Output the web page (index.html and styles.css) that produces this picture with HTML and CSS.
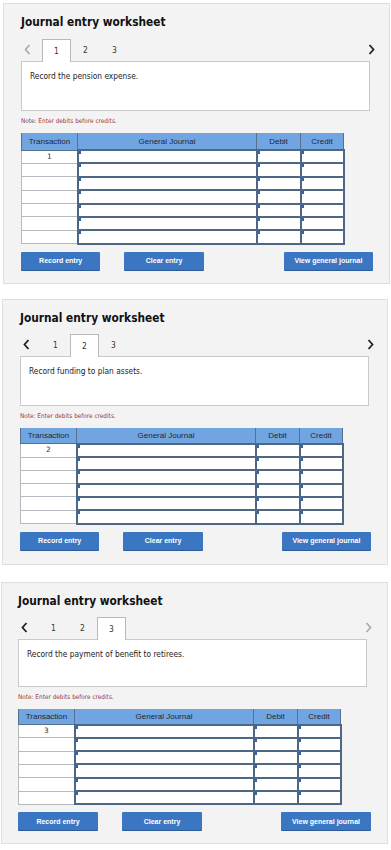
FILE: index.html
```html
<!DOCTYPE html>
<html>
<head>
<meta charset="utf-8">
<link rel="stylesheet" href="styles.css">
</head>
<body>

<section class="ws ws-1">
  <h2 class="ws-title">Journal entry worksheet</h2>
  <div class="tabs">
    <span class="arrow arrow-off"><svg width="7" height="11" viewBox="0 0 7 11"><path d="M5.5 1 L1.5 5.5 L5.5 10" fill="none" stroke="currentColor" stroke-width="1.6"/></svg></span>
    <span class="tab tab-on">1</span>
    <span class="tab">2</span>
    <span class="tab">3</span>
    <span class="arrow arrow-next"><svg width="7" height="11" viewBox="0 0 7 11"><path d="M1.5 1 L5.5 5.5 L1.5 10" fill="none" stroke="currentColor" stroke-width="1.8"/></svg></span>
  </div>
  <div class="prompt">Record the pension expense.</div>
  <p class="note">Note: Enter debits before credits.</p>
  <table class="jt">
    <thead><tr><th class="c-tr">Transaction</th><th class="c-gj">General Journal</th><th class="c-dr">Debit</th><th class="c-cr">Credit</th></tr></thead>
    <tbody>
      <tr><td class="tr">1</td><td class="in"></td><td class="in"></td><td class="in"></td></tr>
      <tr><td class="tr"></td><td class="in"></td><td class="in"></td><td class="in"></td></tr>
      <tr><td class="tr"></td><td class="in"></td><td class="in"></td><td class="in"></td></tr>
      <tr><td class="tr"></td><td class="in"></td><td class="in"></td><td class="in"></td></tr>
      <tr><td class="tr"></td><td class="in"></td><td class="in"></td><td class="in"></td></tr>
      <tr><td class="tr"></td><td class="in"></td><td class="in"></td><td class="in"></td></tr>
      <tr><td class="tr"></td><td class="in"></td><td class="in"></td><td class="in"></td></tr>
    </tbody>
  </table>
  <div class="btns">
    <button class="btn b-rec">Record entry</button>
    <button class="btn b-clr">Clear entry</button>
    <button class="btn b-view">View general journal</button>
  </div>
</section>

<section class="ws ws-2">
  <h2 class="ws-title">Journal entry worksheet</h2>
  <div class="tabs">
    <span class="arrow"><svg width="7" height="11" viewBox="0 0 7 11"><path d="M5.5 1 L1.5 5.5 L5.5 10" fill="none" stroke="currentColor" stroke-width="1.8"/></svg></span>
    <span class="tab">1</span>
    <span class="tab tab-on">2</span>
    <span class="tab">3</span>
    <span class="arrow arrow-next"><svg width="7" height="11" viewBox="0 0 7 11"><path d="M1.5 1 L5.5 5.5 L1.5 10" fill="none" stroke="currentColor" stroke-width="1.8"/></svg></span>
  </div>
  <div class="prompt">Record funding to plan assets.</div>
  <p class="note">Note: Enter debits before credits.</p>
  <table class="jt">
    <thead><tr><th class="c-tr">Transaction</th><th class="c-gj">General Journal</th><th class="c-dr">Debit</th><th class="c-cr">Credit</th></tr></thead>
    <tbody>
      <tr><td class="tr">2</td><td class="in"></td><td class="in"></td><td class="in"></td></tr>
      <tr><td class="tr"></td><td class="in"></td><td class="in"></td><td class="in"></td></tr>
      <tr><td class="tr"></td><td class="in"></td><td class="in"></td><td class="in"></td></tr>
      <tr><td class="tr"></td><td class="in"></td><td class="in"></td><td class="in"></td></tr>
      <tr><td class="tr"></td><td class="in"></td><td class="in"></td><td class="in"></td></tr>
      <tr><td class="tr"></td><td class="in"></td><td class="in"></td><td class="in"></td></tr>
    </tbody>
  </table>
  <div class="btns">
    <button class="btn b-rec">Record entry</button>
    <button class="btn b-clr">Clear entry</button>
    <button class="btn b-view">View general journal</button>
  </div>
</section>

<section class="ws ws-3">
  <h2 class="ws-title">Journal entry worksheet</h2>
  <div class="tabs">
    <span class="arrow"><svg width="7" height="11" viewBox="0 0 7 11"><path d="M5.5 1 L1.5 5.5 L5.5 10" fill="none" stroke="currentColor" stroke-width="1.8"/></svg></span>
    <span class="tab">1</span>
    <span class="tab">2</span>
    <span class="tab tab-on">3</span>
    <span class="arrow arrow-next arrow-off"><svg width="7" height="11" viewBox="0 0 7 11"><path d="M1.5 1 L5.5 5.5 L1.5 10" fill="none" stroke="currentColor" stroke-width="1.6"/></svg></span>
  </div>
  <div class="prompt">Record the payment of benefit to retirees.</div>
  <p class="note">Note: Enter debits before credits.</p>
  <table class="jt">
    <thead><tr><th class="c-tr">Transaction</th><th class="c-gj">General Journal</th><th class="c-dr">Debit</th><th class="c-cr">Credit</th></tr></thead>
    <tbody>
      <tr><td class="tr">3</td><td class="in"></td><td class="in"></td><td class="in"></td></tr>
      <tr><td class="tr"></td><td class="in"></td><td class="in"></td><td class="in"></td></tr>
      <tr><td class="tr"></td><td class="in"></td><td class="in"></td><td class="in"></td></tr>
      <tr><td class="tr"></td><td class="in"></td><td class="in"></td><td class="in"></td></tr>
      <tr><td class="tr"></td><td class="in"></td><td class="in"></td><td class="in"></td></tr>
      <tr><td class="tr"></td><td class="in"></td><td class="in"></td><td class="in"></td></tr>
    </tbody>
  </table>
  <div class="btns">
    <button class="btn b-rec">Record entry</button>
    <button class="btn b-clr">Clear entry</button>
    <button class="btn b-view">View general journal</button>
  </div>
</section>

</body>
</html>
```

FILE: styles.css
```css
html, body {
  margin: 0;
  padding: 0;
  background: #ffffff;
}

body {
  font-family: "DejaVu Sans", Verdana, sans-serif;
  font-stretch: condensed;
  color: #222;
}

.ws {
  box-sizing: border-box;
  background: #f3f3f3;
  border: 1px solid #dedede;
  padding: 0 16px 0 17px;
}

.ws-1 {
  margin: 3px 0 0 3px;
  width: 387px;
  padding-bottom: 13px;
}

.ws-2 {
  margin: 15px 0 0 2px;
  width: 386px;
  padding-bottom: 14px;
}

.ws-3 {
  margin: 17px 0 0 1px;
  width: 387px;
  padding-bottom: 13px;
  padding-left: 16px;
}

.ws-title {
  margin: 0;
  padding-top: 11px;
  font-family: "DejaVu Sans", Verdana, sans-serif;
  font-stretch: condensed;
  font-weight: bold;
  font-size: 11.8px;
  line-height: 14px;
  color: #111;
}

.tabs {
  display: flex;
  align-items: stretch;
  height: 23px;
  margin-top: 9px;
  width: 357px;
}

.ws-2 .tabs { margin-top: 8px; }
.ws-3 .tabs { margin-top: 8px; }

.arrow {
  width: 21px;
  display: flex;
  align-items: center;
  justify-content: flex-start;
  padding-left: 3px;
  box-sizing: border-box;
  color: #222;
}

.arrow svg { display: block; }

.arrow-next {
  margin-left: auto;
  width: 10px;
  padding-left: 0;
}

.arrow-off { color: #a9a9a9; }

.tab {
  box-sizing: border-box;
  width: 29px;
  display: flex;
  align-items: center;
  justify-content: center;
  font-size: 8.4px;
  color: #333;
  border: 1px solid transparent;
  border-bottom: none;
}

.tab-on {
  background: #ffffff;
  border-color: #b9b9b9;
  position: relative;
  top: 1px;
  z-index: 1;
}

.prompt {
  box-sizing: border-box;
  width: 349px;
  height: 50px;
  background: #ffffff;
  border: 1px solid #c9c9c9;
  padding: 9px 0 0 8px;
  font-size: 8.3px;
  line-height: 10px;
  color: #222;
}

.ws-3 .prompt { height: 48px; }

.note {
  margin: 6px 0 0 0;
  font-size: 6.4px;
  line-height: 9px;
  color: #9c3a44;
}

.jt {
  margin-top: 7px;
  border-collapse: collapse;
  width: 318px;
  table-layout: fixed;
  font-family: "Liberation Sans", Arial, sans-serif;
  font-stretch: normal;
}

.jt th {
  background: #71a5e2;
  color: #1f2733;
  font-weight: normal;
  font-size: 8px;
  height: 16px;
  padding: 0;
  border: 1px solid #56708e;
  border-top: none;
}

.ws-2 .jt th, .ws-3 .jt th { height: 15px; }

.c-tr { width: 55px; }
.c-gj { width: 178px; }
.c-dr { width: 43px; }
.c-cr { width: 42px; }

.jt td {
  height: 13.4px;
  padding: 0;
  background: #ffffff;
  box-sizing: border-box;
}

.ws-2 .jt td, .ws-3 .jt td { height: 13.3px; }

.jt td.tr {
  border: 1px solid #b5b9be;
  text-align: center;
  font-family: "DejaVu Sans", Verdana, sans-serif;
  font-size: 7.4px;
  color: #333;
  vertical-align: top;
  line-height: 11px;
}

.jt td.in {
  border: 2px solid #4e6784;
  position: relative;
}

.jt td.in::before {
  content: "";
  position: absolute;
  left: 0;
  top: 0;
  width: 2px;
  height: 3px;
  background: #2f63b0;
}

.btns {
  display: flex;
  margin-top: 7px;
  height: 18px;
}

.btn {
  box-sizing: border-box;
  height: 18px;
  border: none;
  border-radius: 1px;
  background: #3a76c2;
  color: #ffffff;
  font-family: "Liberation Sans", Arial, sans-serif;
  font-weight: bold;
  font-size: 7px;
  padding: 0;
  box-shadow: 0 1px 0 #2c5a96;
}

.b-rec { width: 80px; }
.b-clr { width: 80px; margin-left: 24px; }
.b-view { width: 90px; margin-left: 80px; }

.ws-2 .b-view, .ws-3 .b-view { margin-left: 79px; }
```
